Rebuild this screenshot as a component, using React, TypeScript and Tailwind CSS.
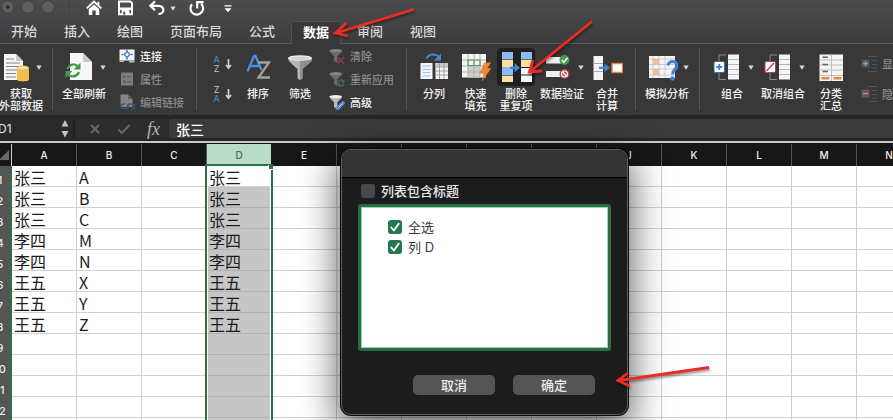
import type { ReactNode } from "react";

const TABS = ["开始", "插入", "绘图", "页面布局", "公式", "数据", "审阅", "视图"];
const COLUMNS = ["A", "B", "C", "D", "E", "F", "G", "H", "I", "J", "K", "L", "M", "N"];
const NAMES = ["张三", "张三", "张三", "李四", "李四", "王五", "王五", "王五"];
const CODES = ["A", "B", "C", "M", "N", "X", "Y", "Z"];
const ROWS = Array.from({ length: 13 }, (_, i) => i);

function Caret() {
  return (
    <svg className="h-[5px] w-[6px] shrink-0" viewBox="0 0 6 5" aria-hidden="true">
      <path d="M0.3 0.5H5.7L3 4.8Z" fill="#d6d6d6" />
    </svg>
  );
}

function Separator({ className }: { className: string }) {
  return <span className={`h-[62px] w-px shrink-0 bg-[#555555] ${className}`} />;
}

type ToolProps = {
  label: string;
  className: string;
  children: ReactNode;
  menu?: boolean;
  active?: boolean;
};

function Tool({ label, className, children, menu, active }: ToolProps) {
  return (
    <button type="button" className={`flex shrink-0 flex-col items-center ${className}`}>
      <span
        className={`flex h-[38px] items-center ${menu ? "w-full justify-between pl-[3px]" : "w-[38px] justify-center"} ${
          active ? "rounded-[4px] bg-[#202020]" : ""
        }`}
      >
        <svg className={`h-[30px] shrink-0 ${menu ? "w-[30px]" : "w-[32px]"}`} viewBox={menu ? "0 0 30 30" : "0 0 32 30"} aria-hidden="true">
          {children}
        </svg>
        {menu && <Caret />}
      </span>
      <span className="pt-px text-center text-[11px] leading-[12px] font-medium whitespace-pre text-[#f2f2f2]">{label}</span>
    </button>
  );
}

function SmallTool({ label, dim, children }: { label: string; dim?: boolean; children: ReactNode }) {
  return (
    <button type="button" className={`flex h-[23px] items-center gap-[5px] whitespace-nowrap ${dim ? "text-[#8c8c8c]" : "text-[#f2f2f2]"}`}>
      <svg className="size-4 shrink-0" viewBox="0 0 16 16" aria-hidden="true">
        {children}
      </svg>
      <span className="text-[11px] leading-[12px] font-medium">{label}</span>
    </button>
  );
}

function Funnel({ dim }: { dim?: boolean }) {
  return (
    <>
      <path d="M0.5 2.5C0.5 3.8 1.5 4.8 5 8.3V13L8.4 15V8.3C12 4.8 13 3.8 13 2.5Z" fill={dim ? "#6a6a6a" : "#b9b9b9"} />
      <ellipse cx="6.7" cy="2.6" rx="6.2" ry="1.7" fill={dim ? "#858585" : "#f1f1f1"} />
    </>
  );
}

function SortIcon({ first, second, blueFirst }: { first: string; second: string; blueFirst?: boolean }) {
  return (
    <span className="flex items-center gap-[5px]">
      <span className="flex w-[7px] flex-col items-center font-[Inter,sans-serif] text-[9px] leading-[9px]">
        <span className={blueFirst ? "text-[#4a90dc]" : "text-[#c2c2c2]"}>{first}</span>
        <span className={blueFirst ? "text-[#c2c2c2]" : "text-[#4a90dc]"}>{second}</span>
      </span>
      <svg className="h-[12px] w-[7px]" viewBox="0 0 7 12" aria-hidden="true">
        <path d="M3.5 1V10M1 7L3.5 10.2L6 7" fill="none" stroke="#d0d0d0" strokeWidth="1.7" />
      </svg>
    </span>
  );
}

function TitleBar() {
  return (
    <div className="flex h-[18px] items-start">
      <svg className="h-[16px] w-[72px] shrink-0" viewBox="0 0 72 16" aria-hidden="true">
        <g fill="#5f5f5f" stroke="#393939" strokeWidth="0.8">
          <circle cx="7.8" cy="7" r="6.3" />
          <circle cx="28" cy="7" r="6.3" />
          <circle cx="48" cy="7" r="6.3" />
        </g>
        <circle cx="7.8" cy="7" r="1.8" fill="#252525" />
        <path d="M69.5 0V15" stroke="#424242" />
      </svg>
      <button type="button" aria-label="主页" className="ml-[14px]">
        <svg className="h-[16px] w-[16px]" viewBox="0 0 16 16">
          <path d="M0.7 8.4L8 1.6L15.3 8.4M12.4 1.8V5" fill="none" stroke="#fff" strokeWidth="1.8" />
          <path d="M2.8 9L8 4.4L13.2 9V15H9.7V10.5H6.3V15H2.8Z" fill="#fff" />
        </svg>
      </button>
      <button type="button" aria-label="保存" className="ml-4">
        <svg className="h-[16px] w-[15px]" viewBox="0 0 15 16">
          <path d="M1 1.5H12.4L14 3.1V14.2H1Z" fill="none" stroke="#fff" strokeWidth="1.9" />
          <path d="M1 7.6H14V10H1ZM3.6 10H11.4V15H3.6Z" fill="#fff" />
          <path d="M5.2 11.7H7.2V14.6H5.2Z" fill="#444" />
        </svg>
      </button>
      <button type="button" aria-label="撤销" className="ml-4">
        <svg className="h-[16px] w-[16px]" viewBox="0 0 16 16">
          <path d="M6 1.4L1.4 5.8L6 10.2M1.8 5.8H9.5C16 5.8 16 14 9.4 14" fill="none" stroke="#fff" strokeWidth="2.2" />
        </svg>
      </button>
      <button type="button" aria-label="撤销菜单" className="ml-[5px] flex h-[16px] items-center">
        <Caret />
      </button>
      <button type="button" aria-label="重做" className="ml-[13px]">
        <svg className="h-[16px] w-[16px]" viewBox="0 0 16 16">
          <path d="M3 4.2A6.3 6.3 0 1 0 12.2 3.8M8.2 8.4V2.2H14.6" fill="none" stroke="#fff" strokeWidth="2.2" />
        </svg>
      </button>
      <button type="button" aria-label="自定义工具栏" className="ml-[19px]">
        <svg className="h-[16px] w-[8px]" viewBox="0 0 8 16">
          <path d="M0.5 5.2H7.5V6.5H0.5ZM0.5 8.3H7.5L4 12.3Z" fill="#fff" />
        </svg>
      </button>
    </div>
  );
}

function Ribbon() {
  return (
    <div className="flex h-[71px] items-start overflow-hidden bg-[#383838] pt-1">
      <Tool label={"获取\n外部数据"} className="w-[42px]" menu>
        <path d="M1 2H13L20 9V28H1Z" fill="#f6f6f6" />
        <path d="M13 2V9H20Z" fill="#c8c8c8" />
        <path d="M3 7H11M3 11H17M3 14.5H17M3 18H14M3 21.5H13M3 25H13" stroke="#777" strokeWidth="0.9" />
        <path d="M14 16V27.5C14 30 26 30 26 27.5V16Z" fill="#f3bd50" />
        <ellipse cx="20" cy="16" rx="6" ry="2.2" fill="#fbe09a" stroke="#dca032" strokeWidth="0.6" />
      </Tool>
      <Separator className="ml-[10px]" />
      <Tool label="全部刷新" className="ml-[9px] w-11" menu>
        <path d="M5 1H18L27 10V28H5Z" fill="#f7f7f7" />
        <path d="M18 1V10H27Z" fill="#c9c9c9" />
        <path d="M2.5 17C4 12 10 11 13 14.5M14 20C12 25 6 25.5 3 22.5" fill="none" stroke="#3f9b4b" strokeWidth="2.4" />
        <path d="M15.500 10.5V17.5H8.500ZM0.5 26V19H7.5Z" fill="#3f9b4b" />
      </Tool>
      <div className="ml-[13px] flex w-[65px] shrink-0 flex-col">
        <div className="-mt-1">
          <SmallTool label="连接">
            <path d="M0.5 1.5H15.5V12.5H0.5Z" fill="#f3f3f3" />
            <path d="M0.5 12.5H5V14H0.5ZM10 12.5H15.5V14.5H10Z" fill="#bbb" />
            <path d="M8 3.500L11 6.5L8 9.5L5 6.5Z" fill="none" stroke="#3277c8" strokeWidth="1.2" />
            <path d="M2.5 6.5H4M12 6.5H13.5M8 2V3M8 10V11.5" stroke="#3277c8" strokeWidth="1.5" />
          </SmallTool>
        </div>
        <SmallTool label="属性" dim>
          <path d="M2 1.5H14V14.5H2Z" fill="#7d7d7d" />
          <path d="M4 4.5H6.5V7H4ZM4 9.5H6.5V12H4Z" fill="#4f5f75" />
          <path d="M8 5.8H12.5M8 10.8H12.5" stroke="#505050" />
        </SmallTool>
        <SmallTool label="编辑链接" dim>
          <path d="M1.5 0.5H9L13.5 5V13H1.5Z" fill="#858585" />
          <path d="M9 0.5V5H13.5Z" fill="#606060" />
          <path d="M6 10H4.5A2.3 2.3 0 0 0 4.5 14.6H8A2.3 2.3 0 0 0 9.5 11.5M12 14.6H13.5A2.3 2.3 0 0 0 13.5 10H10A2.3 2.3 0 0 0 8.5 13" fill="none" stroke="#37597d" strokeWidth="1.4" />
        </SmallTool>
      </div>
      <Separator className="ml-3" />
      <div className="ml-4 flex w-[19px] shrink-0 flex-col gap-3 pt-[7px]">
        <button type="button" aria-label="升序">
          <SortIcon first="A" second="Z" blueFirst />
        </button>
        <button type="button" aria-label="降序">
          <SortIcon first="Z" second="A" />
        </button>
      </div>
      <Tool label="排序" className="ml-[5px] w-[42px]">
        <path d="M5.5 19.5L12 4H13.5L19.5 18M8 14H17" fill="none" stroke="#4a90dc" strokeWidth="2.3" />
        <path d="M16 10.5H27L16.5 25.5H28" fill="none" stroke="#a49f98" strokeWidth="2.3" />
      </Tool>
      <Tool label="筛选" className="w-[42px]">
        <path d="M4 6C4 9 7 11 13.5 17V25.5C13.5 28.5 18.5 28.5 18.5 25.5V17C25 11 28 9 28 6Z" fill="#b5b5b5" />
        <path d="M16 8H28C27 11 24 12 18.5 17V26L16 27.5Z" fill="#8f8f8f" />
        <ellipse cx="16" cy="6" rx="12" ry="2.8" fill="#f3f3f3" />
        <ellipse cx="16" cy="6.3" rx="9.5" ry="1.7" fill="#d2d2d2" />
      </Tool>
      <div className="ml-2 flex w-[65px] shrink-0 flex-col">
        <div className="-mt-1">
          <SmallTool label="清除" dim>
            <Funnel dim />
            <path d="M8.5 9L15 15.5M15 9L8.5 15.5" stroke="#8a3f46" strokeWidth="1.6" />
          </SmallTool>
        </div>
        <SmallTool label="重新应用" dim>
          <Funnel dim />
          <path d="M9 11.5A3.2 3.2 0 0 1 14.5 10M15 12.5A3.2 3.2 0 0 1 9.5 14" fill="none" stroke="#4c6b4f" strokeWidth="1.4" />
          <path d="M15.5 8V11.5H12ZM8.5 16V12.5H12Z" fill="#4c6b4f" />
        </SmallTool>
        <SmallTool label="高级">
          <Funnel />
          <path d="M8.500 14.5L14 9" stroke="#4a90dc" strokeWidth="3.6" strokeLinecap="round" />
          <path d="M9.5 13.5L13.5 9.5" stroke="#b9d8f6" strokeWidth="1" />
        </SmallTool>
      </div>
      <Separator className="ml-3" />
      <Tool label="分列" className="ml-[6px] w-[42px]">
        <path d="M8.5 6.5C11 1.5 18 1.5 21 5" fill="none" stroke="#4688cf" strokeWidth="2" />
        <path d="M23 1.5V8.5H16Z" fill="#4688cf" />
        <path d="M2.5 11H14.5V27H2.5ZM17.5 11H30V27H17.5Z" fill="#f5f5f5" />
        <path d="M4.5 14H12.5M4.5 17.5H12.5M4.5 20.5H12.5M4.5 24H12.5" stroke="#9cc3ea" strokeWidth="1.2" />
        <path d="M17.5 11H30V14.5H17.5Z" fill="#c9c9c9" />
        <path d="M17.5 15H30M17.5 19H30M17.5 23H30M21.5 11V27M26 11V27" stroke="#9b9b9b" strokeWidth="0.9" />
      </Tool>
      <Tool label={"快速\n填充"} className="w-[41px]">
        <path d="M2 2H26V25.5H2Z" fill="#f5f5f5" />
        <path d="M8 14H20V25.5H8Z" fill="#cfcfcf" />
        <path d="M2 8H26M2 14H26M2 20H26M8 2V25.5M14 2V25.5M20 2V25.5" stroke="#a9a9a9" strokeWidth="0.9" />
        <path d="M8 8H20V13.5H8ZM14 8V13.5" fill="none" stroke="#55a05d" strokeWidth="1.2" />
        <path d="M24.5 11L31 10.5L27.5 16L31 16.5L22 29L24 21.5L20 21Z" fill="#f08a35" stroke="#cf6a1c" strokeWidth="0.5" />
      </Tool>
      <Tool label={"删除\n重复项"} className="w-10" active>
        <path d="M2 0H13V7.5H2ZM2 15H13V23.5H2ZM21 0H32V7.5H21Z" fill="#8fbcf0" />
        <path d="M2 8H13V15H2ZM2 24H13V30H2ZM21 8H32V15H21Z" fill="#fbdf9c" />
        <path d="M21 16H32V22.5H21ZM21 23.5H32V30H21Z" fill="#f5f5f5" />
        <path d="M10 15.800H16" stroke="#3c85d8" strokeWidth="2.4" />
        <path d="M14.5 11V20.5L20 15.8Z" fill="#3c85d8" />
      </Tool>
      <Tool label="数据验证" className="ml-1 w-11" menu>
        <path d="M3 5H19V11.5H3ZM3 19H19V25H3Z" fill="#eeeeee" />
        <circle cx="21.5" cy="8" r="5" fill="#449a4b" />
        <path d="M18.8 8L21 10.2L24.5 5.8" fill="none" stroke="#fff" strokeWidth="1.6" />
        <circle cx="21.5" cy="22" r="5" fill="#c0434c" />
        <circle cx="21.5" cy="22" r="3" fill="none" stroke="#fff" strokeWidth="1.2" />
        <path d="M19.5 20L23.5 24" stroke="#fff" strokeWidth="1.2" />
      </Tool>
      <Tool label={"合并\n计算"} className="ml-[2px] w-[42px]">
        <path d="M2.5 4H12V28H2.5Z" fill="#f5f5f5" />
        <path d="M2.5 11.5H12M2.5 19.5H12" stroke="#aaa" />
        <path d="M8 15.8H15" stroke="#3c85d8" strokeWidth="2.2" />
        <path d="M13.5 11.5V20L19 15.8Z" fill="#3c85d8" />
        <path d="M21 11.5H31.5V20.5H21Z" fill="#fff" stroke="#e08045" strokeWidth="1.3" />
      </Tool>
      <Separator className="ml-[7px]" />
      <Tool label="模拟分析" className="ml-[9px] w-11" menu>
        <path d="M1 4H27V26H1Z" fill="#f5f5f5" />
        <path d="M5 7H11V12.5H5ZM5 17H11V23H5Z" fill="#f6bd90" />
        <path d="M1 7H27M1 12.5H27M1 17H27M1 23H27M5 4V26M11 4V26M17 4V26" stroke="#c2c2c2" strokeWidth="0.8" />
        <path d="M20 13.5C20.5 8 29 8 29 13.5C29 17.5 24.5 17 24.5 22.5" fill="none" stroke="#3c85d8" strokeWidth="3" />
        <circle cx="24.5" cy="26.5" r="2.2" fill="#3c85d8" />
      </Tool>
      <Separator className="ml-[10px]" />
      <Tool label="组合" className="ml-[10px] w-11" menu>
        <path d="M13 3H6V27.5H13" fill="none" stroke="#8a8a8a" />
        <path d="M15 2.5H26V27.5H15Z" fill="#f5f5f5" />
        <path d="M15 7.5H26M15 12.5H26M15 17.5H26M15 22.5H26" stroke="#b0b0b0" strokeWidth="0.9" />
        <rect x="1" y="9.5" width="10.5" height="11" rx="1.5" fill="#fff" stroke="#2f6cb0" />
        <path d="M6.25 12V18M3.25 15H9.25" stroke="#3c85d8" strokeWidth="1.9" />
      </Tool>
      <Tool label="取消组合" className="ml-[7px] w-11" menu>
        <path d="M13 3H6V27.5H13" fill="none" stroke="#8a8a8a" />
        <path d="M15 2.5H26V27.5H15Z" fill="#f5f5f5" />
        <path d="M15 7.5H26M15 12.5H26M15 17.5H26M15 22.5H26" stroke="#b0b0b0" strokeWidth="0.9" />
        <rect x="1" y="9.5" width="10.5" height="11" rx="1.5" fill="#fff" stroke="#b8424c" />
        <path d="M2.5 19L10 11" stroke="#b8424c" strokeWidth="1.3" />
      </Tool>
      <Tool label={"分类\n汇总"} className="ml-[5px] w-[42px]">
        <path d="M4.5 2.5H28V29H4.5Z" fill="#f5f5f5" />
        <path d="M4.5 8H28M4.5 13H28M4.5 18H28M4.5 23.5H28M16.5 2.5V29" stroke="#b9b9b9" strokeWidth="0.9" />
        <path d="M7.5 5.3H13M7.5 12.5H13M7.5 19.5H13" stroke="#666" strokeWidth="1.5" />
        <path d="M6.5 25H14.5V27.5H6.5ZM18.5 25H26.5V27.5H18.5Z" fill="#e58a3c" />
      </Tool>
      <div className="ml-[9px] flex shrink-0 flex-col gap-[7px] pt-1">
        <SmallTool label="显" dim>
          <path d="M7 0.5H16M11 4.5H16M11 8.5H16M11 12H16M7 15.5H16" stroke="#555" />
          <rect x="0.5" y="3.5" width="8" height="8" rx="1" fill="#4a5566" />
          <path d="M4.5 5V10M2 7.5H7" stroke="#8aa5c4" strokeWidth="1.3" />
        </SmallTool>
        <SmallTool label="隐" dim>
          <path d="M7 0.5H16M11 4.5H16M11 8.5H16M11 12H16M7 15.5H16" stroke="#555" />
          <rect x="0.5" y="3.5" width="8" height="8" rx="1" fill="#6f5156" />
          <path d="M2 7.5H7" stroke="#b3959a" strokeWidth="1.3" />
        </SmallTool>
      </div>
    </div>
  );
}

function FormulaBar() {
  return (
    <div className="flex h-[26px] items-stretch border-t-4 border-b-3 border-[#262626] bg-[#2d2d2d]">
      <div className="flex w-[73px] shrink-0 items-center justify-between overflow-hidden bg-[#2a2a2a] pr-1">
        <input
          aria-label="名称框"
          defaultValue="D1"
          className="-ml-[2px] w-10 bg-transparent font-[Inter,sans-serif] text-[12px] leading-[16px] text-[#e6e6e6] outline-none"
        />
        <svg className="h-[19px] w-[8px]" viewBox="0 0 8 19" aria-hidden="true">
          <path d="M0.5 7.5L4 1L7.5 7.5ZM0.5 12L4 18.5L7.5 12Z" fill="#c4c4c4" />
        </svg>
      </div>
      <div className="flex w-24 shrink-0 items-center border-l-2 border-[#222222] pl-[14px]">
        <button type="button" aria-label="取消输入">
          <svg className="size-3" viewBox="0 0 12 12">
            <path d="M2 2L10 10M10 2L2 10" stroke="#666" strokeWidth="2.2" />
          </svg>
        </button>
        <button type="button" aria-label="确认输入" className="ml-4">
          <svg className="h-3 w-[14px]" viewBox="0 0 14 12">
            <path d="M1.5 6.5L5 10L12.5 2" fill="none" stroke="#666" strokeWidth="2.2" />
          </svg>
        </button>
        <button type="button" aria-label="插入函数" className="ml-4 font-['Liberation_Serif',serif] text-[18px] leading-[18px] text-[#b4b4b4] italic">
          fx
        </button>
      </div>
      <input
        aria-label="编辑栏"
        defaultValue="张三"
        className="min-w-0 flex-1 rounded-l-[3px] bg-[#3a3a3a] pl-[7px] text-[14px] leading-[18px] font-medium text-white outline-none"
      />
    </div>
  );
}

function Sheet() {
  return (
    <div className="relative min-h-0 flex-1 overflow-hidden bg-white">
      <table className="-ml-3 w-max table-fixed border-separate border-spacing-0">
        <colgroup>
          <col className="w-[24px]" />
          {COLUMNS.map((c) => (
            <col key={c} className="w-[65px]" />
          ))}
        </colgroup>
        <thead>
          <tr className="h-[22px] bg-[#171717] font-[Inter,sans-serif] text-[10px] leading-[12px] text-[#f0f0f0]">
            <th className="w-[24px] border-r border-[#d0d0d0] p-0">
              <svg className="ml-auto h-[13px] w-[13px]" viewBox="0 0 13 13" aria-hidden="true">
                <path d="M11 1V11H1Z" fill="#6a6a6a" />
              </svg>
            </th>
            {COLUMNS.map((c) => (
              <th
                key={c}
                scope="col"
                className={`w-[65px] border-r p-0 font-medium ${
                  c === "D" ? "border-[#171717] bg-[#b9dcc8] text-[#3b7355]" : "border-[#555555]"
                }`}
              >
                {c}
              </th>
            ))}
          </tr>
        </thead>
        <tbody>
          {ROWS.map((r) => (
            <tr key={r} className="h-[21px]">
              <th
                scope="row"
                className="border-r-2 border-[#2c7049] bg-[#555555] p-0 pt-[7px] pl-[2px] text-center font-[Inter,sans-serif] text-[11px] leading-[12px] font-medium text-[#ededed]"
              >
                {r < 12 ? r + 1 : ""}
              </th>
              {COLUMNS.map((c) => (
                <td
                  key={c}
                  className={`border-r border-b p-0 pt-px pl-[2px] text-[16px] leading-[18px] whitespace-nowrap text-[#1c1c1c] ${
                    c === "D" && r > 0 ? "border-[#b2b2b2] bg-[#c6c6c6]" : "border-[#d0d0d0]"
                  }`}
                >
                  {c === "A" || c === "D" ? NAMES[r] : c === "B" ? CODES[r] : ""}
                </td>
              ))}
            </tr>
          ))}
        </tbody>
      </table>
      <div className="pointer-events-none absolute top-[20px] -bottom-2 left-[205px] w-[68px] border-2 border-[#2c7049] shadow-[inset_0_0_0_1px_#ffffff]">
        <span className="absolute -top-px -right-[2px] size-[5px] border-b border-l border-white bg-[#2c7049]" />
      </div>
    </div>
  );
}

function CheckMark() {
  return (
    <svg className="pointer-events-none col-start-1 row-start-1 size-[14px]" viewBox="0 0 14 14" aria-hidden="true">
      <path d="M3.3 7.5L5.9 10.5L10.7 3.7" fill="none" stroke="#fff" strokeWidth="1.9" strokeLinecap="round" strokeLinejoin="round" />
    </svg>
  );
}

function Option({ label }: { label: string }) {
  return (
    <label className="flex h-5 items-center gap-[6px] font-[Inter,'Noto_Sans_CJK_SC',sans-serif] text-[13px] leading-[16px] text-[#3c3c3c]">
      <span className="grid">
        <input type="checkbox" defaultChecked className="col-start-1 row-start-1 size-[14px] appearance-none rounded-[3px] bg-[#23784f]" />
        <CheckMark />
      </span>
      {label}
    </label>
  );
}

function DuplicatesDialog() {
  return (
    <div
      role="dialog"
      aria-label="列表包含标题"
      className="absolute top-[149px] left-[341px] flex w-[287px] flex-col overflow-hidden rounded-[10px] border border-[#606060] bg-[#1c1c1c] shadow-[0_0_0_1px_#080808,0_12px_36px_4px_rgba(0,0,0,0.6)]"
    >
      <div className="h-7 border-b border-black bg-[#333333]" />
      <div className="flex flex-col px-4 pt-[5px] pb-[19px]">
        <label className="ml-[3px] flex h-4 items-center gap-[6px] text-[13px] leading-[16px] font-medium text-[#e8e8e8]">
          <input type="checkbox" className="size-[14px] appearance-none rounded-[3px] bg-[#484848]" />
          列表包含标题
        </label>
        <div className="mt-[5px] h-[147px] rounded-[3px] border-3 border-[#2b6b45] bg-white">
          <div className="flex h-full flex-col border border-[#8fdcae] pt-[9px] pl-[26px]">
            <Option label="全选" />
            <Option label="列 D" />
          </div>
        </div>
        <div className="mt-6 flex justify-end gap-[18px] pr-4">
          <button type="button" className="h-5 w-[82px] rounded-[5px] bg-[#555555] text-[13px] leading-[18px] font-medium text-[#ededed]">
            取消
          </button>
          <button type="button" className="h-5 w-[82px] rounded-[5px] bg-[#555555] text-[13px] leading-[18px] font-medium text-[#ededed]">
            确定
          </button>
        </div>
      </div>
    </div>
  );
}

function Arrows() {
  return (
    <svg
      className="pointer-events-none absolute top-0 left-0 h-[420px] w-[893px] drop-shadow-[1px_2px_1px_rgba(0,0,0,0.4)]"
      viewBox="0 0 893 420"
      fill="none"
      stroke="#ee2a24"
      strokeWidth="2.8"
      aria-hidden="true"
    >
      <path d="M413.5 9.5L336 33M346.5 23L335.5 33L348 36" />
      <path d="M592 21.5L530 71.5M533 60L529.5 72L542 71" />
      <path d="M709 367.5L619 380.5M628 373L618 380.5L629.5 386" />
    </svg>
  );
}

export default function App() {
  return (
    <div className="relative flex h-screen flex-col overflow-hidden bg-[#383838] font-['Noto_Sans_CJK_SC',sans-serif]">
      <header className="flex h-11 shrink-0 flex-col bg-linear-to-b from-[#4c4c4c] to-[#3c3c3c]">
        <TitleBar />
        <nav className="flex flex-1 items-stretch gap-[5px] border-b border-[#585858] pt-[3px]">
          {TABS.map((t) => (
            <button
              key={t}
              type="button"
              className={`px-[11px] pb-[3px] text-[13px] leading-[18px] whitespace-nowrap ${
                t === "数据"
                  ? "-mb-px rounded-t-[2px] border-x border-t border-[#505050] bg-[#383838] font-bold text-white"
                  : "font-medium text-[#d8d8d8]"
              }`}
            >
              {t}
            </button>
          ))}
        </nav>
      </header>
      <Ribbon />
      <FormulaBar />
      <div className="h-[3px] shrink-0 border-b border-[#171717] bg-[#cdc6ca]" />
      <Sheet />
      <DuplicatesDialog />
      <Arrows />
    </div>
  );
}
